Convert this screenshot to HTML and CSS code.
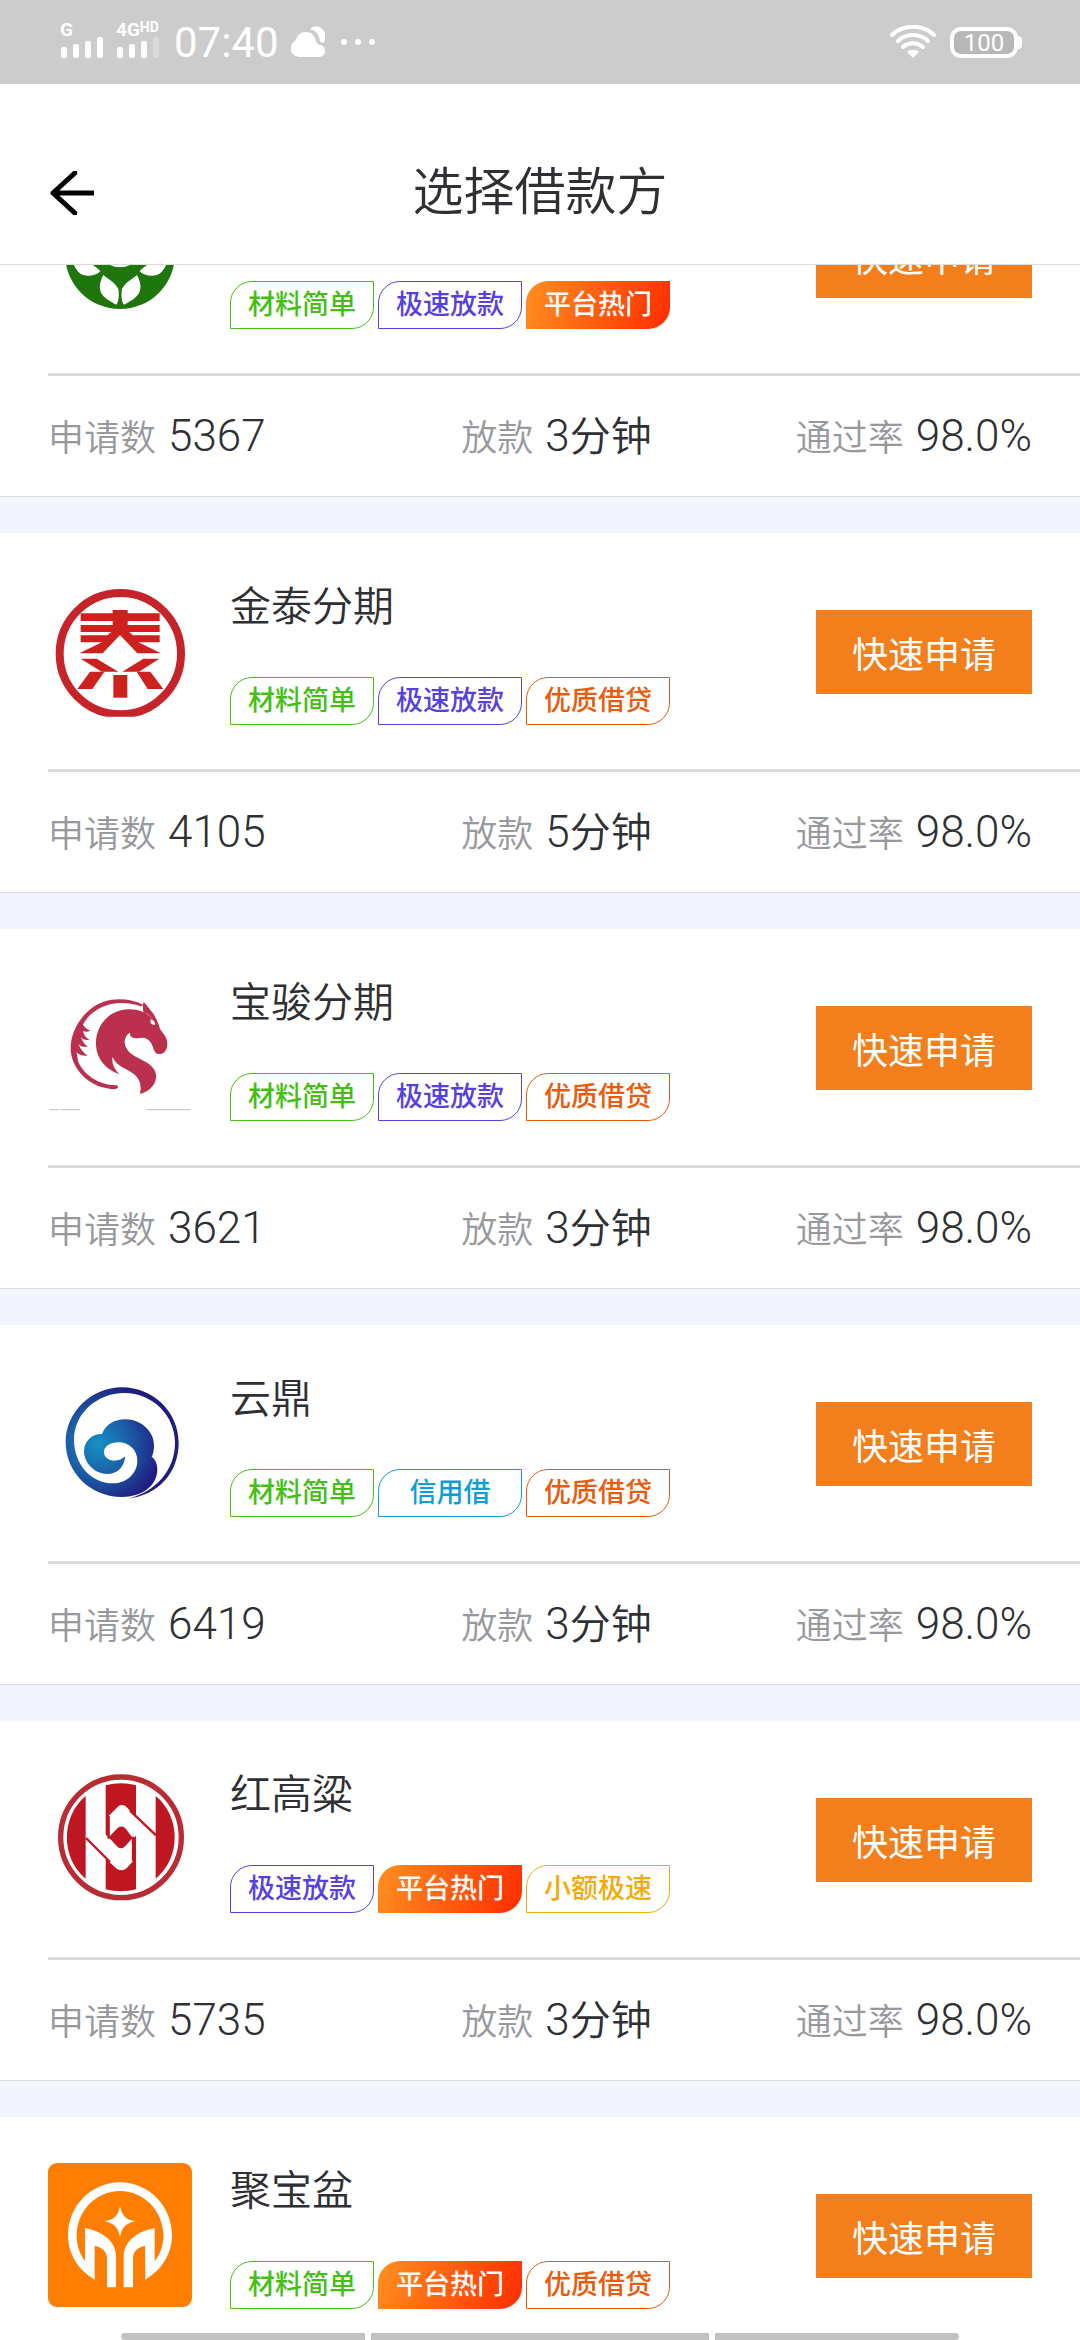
FILE: index.html
```html
<!DOCTYPE html>
<html lang="zh-CN">
<head>
    <meta charset="UTF-8">
    <meta name="viewport" content="width=device-width, initial-scale=1.0">
    <title>选择借款方</title>
    <link rel="stylesheet" href="styles.css">
</head>
<body>
    <div class="status-bar">
        <div class="signal">
            <span class="net">G</span>
            <svg width="44" height="21" viewBox="0 0 44 21" fill="#fff">
                <rect x="1" y="10" width="6" height="11" rx="2"/>
                <rect x="13" y="7" width="6" height="14" rx="2"/>
                <rect x="25" y="4" width="6" height="17" rx="2"/>
                <rect x="37" y="0" width="6" height="21" rx="2"/>
            </svg>
        </div>
        <div class="signal second">
            <span class="net">4G<sup>HD</sup></span>
            <svg width="44" height="21" viewBox="0 0 44 21" fill="#fff">
                <rect x="1" y="10" width="6" height="11" rx="2"/>
                <rect x="13" y="7" width="6" height="14" rx="2"/>
                <rect x="25" y="4" width="6" height="17" rx="2"/>
                <rect x="37" y="0" width="6" height="21" rx="2" opacity="0.25"/>
            </svg>
        </div>
        <span class="time">07:40</span>
        <svg class="cloud" width="34" height="32" viewBox="0 0 34 32" fill="#fff">
            <path d="M8 31a8 8 0 0 1-8-9c0-4 2-6 5-8C6 9 10 6 15 6c6 0 9 4 10 9 1 3 3 4 5 4 3 1 4 3 4 6 0 4-3 6-7 6z"/>
            <path d="M19 3c3-3 7-4 11-1 5 3 5 9 3 15l-4-1c0-6-3-11-10-13z"/>
        </svg>
        <svg width="34" height="6" viewBox="0 0 34 6" fill="#fff">
            <circle cx="3" cy="3" r="3"/>
            <circle cx="17" cy="3" r="3"/>
            <circle cx="31" cy="3" r="3"/>
        </svg>
        <svg class="wifi" width="46" height="34" viewBox="0 0 46 34" fill="none" stroke="#fff" stroke-width="4" stroke-linecap="round">
            <path d="M2 10C13-1 33-1 44 10"/>
            <path d="M8 16c8-8 22-8 30 0"/>
            <path d="M13 22c6-5 14-5 20 0"/>
            <path d="M17 27c3-3 9-3 12 0l-6 6z" fill="#fff" stroke="none"/>
        </svg>
        <div class="battery">100</div>
    </div>

    <header class="nav">
        <button class="back" aria-label="返回">
            <svg width="44" height="44" viewBox="0 0 44 44" fill="none" stroke="#000" stroke-width="5">
                <path d="M44 22H4M27 1h-1L3 22l23 21h1" stroke-linejoin="round"/>
            </svg>
        </button>
        <h1>选择借款方</h1>
    </header>

    <main>
        <ul class="loans">
            <li class="loan">
                <div class="top">
                    <svg class="logo" viewBox="24 -216 432 432">
                        <circle cx="240" cy="-3" r="165" fill="#1f760c"/>
                        <g fill="#fff">
                            <path d="M190 60c-18 34-12 55 10 72l28 17c9-5 10-32 7-47-10-20-28-28-45-42z"/>
                            <path d="M291 60c18 34 12 55-10 72l-28 17c-9-5-10-32-7-47 10-20 28-28 45-42z"/>
                            <path d="M98 22c12 28 25 43 52 40 15-1 26-7 31-14-20-20-45-36-83-26z"/>
                            <path d="M382 22c-12 28-25 43-52 40-15-1-26-7-31-14 20-20 45-36 83-26z"/>
                            <ellipse cx="240" cy="0" rx="50" ry="37"/>
                        </g>
                    </svg>
                    <div class="info">
                        <div class="tags">
                            <span class="tag green">材料简单</span>
                            <span class="tag purple">极速放款</span>
                            <span class="tag hot">平台热门</span>
                        </div>
                    </div>
                    <button class="apply">快速申请</button>
                </div>
                <div class="stats">
                    <div>申请数 <b>5367</b></div>
                    <div>放款 <b>3<small>分钟</small></b></div>
                    <div>通过率 <b>98.0%</b></div>
                </div>
            </li>

            <li class="loan">
                <div class="top">
                    <svg class="logo" viewBox="54 57 432 432">
                        <clipPath id="cut"><rect x="54" y="57" width="432" height="413"/></clipPath>
                        <circle cx="271" cy="281" r="182" fill="none" stroke="#c4242a" stroke-width="24" clip-path="url(#cut)"/>
                        <g fill="#cc211c">
                            <path d="M152 160h96v-10h45v10h96v23h-96v12h96v21h-92l12 10h80v21h-64l68 33h-71l-52-55-52 55h-70l68-33h-64v-21h80l12-10h-92v-21h96v-12h-96z"/>
                            <path d="M152 296h48l65 39h-50zM388 296h-48l-63 39h50z"/>
                            <path d="M180 335h43l-36 52h-45zM361 335h-41l33 52h47z"/>
                            <path d="M250 345h42v68h-42z"/>
                        </g>
                    </svg>
                    <div class="info">
                        <h2>金泰分期</h2>
                        <div class="tags">
                            <span class="tag green">材料简单</span>
                            <span class="tag purple">极速放款</span>
                            <span class="tag orange">优质借贷</span>
                        </div>
                    </div>
                    <button class="apply">快速申请</button>
                </div>
                <div class="stats">
                    <div>申请数 <b>4105</b></div>
                    <div>放款 <b>5<small>分钟</small></b></div>
                    <div>通过率 <b>98.0%</b></div>
                </div>
            </li>

            <li class="loan">
                <div class="top">
                    <svg class="logo" viewBox="54 45 432 432">
                        <g fill="#bb304f">
                            <path d="M338 137l3-12 16 20c17 20 27 38 33 62 10 15 23 26 22 46-1 14-6 27-20 29-14 2-18-5-22-17-4-14-12-28-28-32-13 0-25 5-36-1-7-4-5-9-7-14-10 6-16 19-15 31 3 31 37 42 62 56 22 13 34 27 32 48-2 26-25 42-48 49 5-24 0-44-15-57-22-20-55-23-67-54-4 21 6 36 20 52-39-15-67-43-70-86-4-60 40-108 97-109 30-1 55 9 75 30-7-9-18-17-30-21z"/>
                            <path d="M340 134c-53-23-112-23-158 13-39 31-61 77-60 122 3 54 46 99 96 113 18 5 32 7 42 4 7-4 5-11-4-10-50-2-93-30-111-70-2-10-4-19-5-30 7 9 18 13 33 11-13-7-22-20-27-34 9 8 16 9 28 6-13-7-17-17-21-28 8 9 15 10 25 8-11-6-17-15-19-27 7 4 13 4 22 0-8-4-17-9-22-18 25-49 91-83 174-55z"/>
                        </g>
                        <path d="M362 178c-3 11 2 17 13 17 1-8-4-15-13-17z" fill="#fff"/>
                        <path d="M58 449h28M91 449h59M349 449h133" stroke="#ccc" stroke-width="4"/>
                    </svg>
                    <div class="info">
                        <h2>宝骏分期</h2>
                        <div class="tags">
                            <span class="tag green">材料简单</span>
                            <span class="tag purple">极速放款</span>
                            <span class="tag orange">优质借贷</span>
                        </div>
                    </div>
                    <button class="apply">快速申请</button>
                </div>
                <div class="stats">
                    <div>申请数 <b>3621</b></div>
                    <div>放款 <b>3<small>分钟</small></b></div>
                    <div>通过率 <b>98.0%</b></div>
                </div>
            </li>

            <li class="loan">
                <div class="top">
                    <svg class="logo" viewBox="54 33 432 432">
                        <defs>
                            <radialGradient id="sea" gradientUnits="userSpaceOnUse" cx="205" cy="255" r="190">
                                <stop offset="0" stop-color="#1691c4"/>
                                <stop offset="0.5" stop-color="#1b5da6"/>
                                <stop offset="1" stop-color="#1f1d80"/>
                            </radialGradient>
                        </defs>
                        <path d="M276 82c94 0 170 75 170 166 0 91-62 157-152 168 86-22 141-88 141-168 0-80-66-149-152-149-82 0-151 62-151 140 0 75 53 131 116 131 45 0 74-33 74-68 0-34-27-55-56-55-26 0-44 12-44 30 0 15 14 25 31 25 13 0 24-5 33-13-4 35-26 53-54 53-39 0-70-34-70-68 0-31 25-53 54-52 11-29 38-44 70-44 49 0 88 38 86 82-1 14-3 24-7 30 11 7 17 22 17 38 0 51-48 83-106 83-93 0-169-72-169-165 0-88 76-164 169-164z" fill="url(#sea)"/>
                    </svg>
                    <div class="info">
                        <h2>云鼎</h2>
                        <div class="tags">
                            <span class="tag green">材料简单</span>
                            <span class="tag blue">信用借</span>
                            <span class="tag orange">优质借贷</span>
                        </div>
                    </div>
                    <button class="apply">快速申请</button>
                </div>
                <div class="stats">
                    <div>申请数 <b>6419</b></div>
                    <div>放款 <b>3<small>分钟</small></b></div>
                    <div>通过率 <b>98.0%</b></div>
                </div>
            </li>

            <li class="loan">
                <div class="top">
                    <svg class="logo" viewBox="54 51 432 432">
                        <circle cx="273" cy="262" r="181" fill="none" stroke="#b92c34" stroke-width="16"/>
                        <g fill="#bf1722">
                            <path d="M167 138v248c-75-62-75-186 0-248zM377 138v248c76-62 76-186 0-248z"/>
                            <path d="M227 106c30-8 62-8 91 0v96l-28-30c-8-9-20-9-28 0l-26 26v64l-9-8z"/>
                            <path d="M318 418c-30 8-62 8-91 0v-92l30 27c10 10 24 10 34 0l18-19v-68l9-9z"/>
                            <path d="M236 262l24-25c8-10 20-10 28 0l20 27-22 24c-8 9-18 9-26 0z"/>
                        </g>
                        <path d="M168 264l72 72M300 182l78 74M236 266v-68M309 260v74" fill="none" stroke="#bf1722" stroke-width="7"/>
                    </svg>
                    <div class="info">
                        <h2>红高粱</h2>
                        <div class="tags">
                            <span class="tag purple">极速放款</span>
                            <span class="tag hot">平台热门</span>
                            <span class="tag yellow">小额极速</span>
                        </div>
                    </div>
                    <button class="apply">快速申请</button>
                </div>
                <div class="stats">
                    <div>申请数 <b>5735</b></div>
                    <div>放款 <b>3<small>分钟</small></b></div>
                    <div>通过率 <b>98.0%</b></div>
                </div>
            </li>

            <li class="loan">
                <div class="top">
                    <svg class="logo" viewBox="54 69 432 432">
                        <rect x="54" y="69" width="432" height="432" rx="27" fill="#fe7d03"/>
                        <g fill="#fff">
                            <path d="M270 198c6 30 18 41 46 46-28 6-40 17-46 46-6-29-18-40-47-46 29-5 41-16 47-46z"/>
                            <path d="M194 419c-49-28-80-77-80-133 0-88 70-159 156-159s156 71 156 159c0 56-32 105-80 133l-1-102c-20 5-36 15-36 38v87h-28v-92c0-48 44-77 93-86v99c16-20 26-46 26-76 0-74-58-134-130-134s-130 60-130 134c0 30 10 56 25 76v-99c50 9 93 38 93 86v92h-27v-87c0-23-17-33-37-38z"/>
                        </g>
                    </svg>
                    <div class="info">
                        <h2>聚宝盆</h2>
                        <div class="tags">
                            <span class="tag green">材料简单</span>
                            <span class="tag hot">平台热门</span>
                            <span class="tag orange">优质借贷</span>
                        </div>
                    </div>
                    <button class="apply">快速申请</button>
                </div>
            </li>
        </ul>
    </main>

    <div class="gesture-bar">
        <span></span>
        <span class="wide"></span>
        <span></span>
    </div>
</body>
</html>
```

FILE: styles.css
```css
* {
    box-sizing: border-box;
}

body {
    margin: 0;
    height: 100vh;
    display: flex;
    flex-direction: column;
    overflow: hidden;
    background: #fff;
    color: #2e3033;
    font-family: Roboto, "Noto Sans CJK SC", sans-serif;
    font-weight: 350;
}

h1, h2, ul {
    margin: 0;
    padding: 0;
    font-weight: 350;
}

button {
    border: none;
    padding: 0;
    font-family: inherit;
    cursor: pointer;
}

/* Phone status bar */
.status-bar {
    flex: none;
    display: flex;
    align-items: center;
    height: 84px;
    padding: 0 62px 0 60px;
    background: #ccc;
    color: #fff;
}

.signal {
    display: flex;
    flex-direction: column;
    height: 40px;
}

.signal svg {
    display: block;
}

.second {
    width: 46px;
    margin-left: 12px;
}

.net {
    height: 15px;
    font-size: 19px;
    line-height: 15px;
    font-weight: 700;
    white-space: nowrap;
}

.net sup {
    font-size: 14px;
    line-height: 10px;
    vertical-align: 4px;
}

.time {
    margin-left: 12px;
    font-size: 42px;
    font-weight: 400;
}

.cloud {
    margin: 0 16px 0 12px;
}

.wifi {
    margin-left: auto;
}

.battery {
    position: relative;
    width: 68px;
    height: 31px;
    margin-left: 14px;
    border: 4px solid #fff;
    border-radius: 11px;
    background: #b8b8b8;
    font-size: 24px;
    font-weight: 400;
    line-height: 24px;
    text-align: center;
}

.battery::after {
    content: "";
    position: absolute;
    top: 5px;
    right: -8px;
    width: 4px;
    height: 13px;
    border-radius: 0 4px 4px 0;
    background: #fff;
}

/* Title bar */
.nav {
    flex: none;
    display: grid;
    grid-template-columns: 1fr auto 1fr;
    align-items: center;
    height: 181px;
    padding: 38px 50px 0;
    border-bottom: 1px solid #dcdcdc;
}

.nav h1 {
    font-size: 51px;
    line-height: 72px;
}

.back {
    justify-self: start;
    background: none;
}

.back svg {
    display: block;
}

/* Loan list, scrolled part of the way through the first item */
main {
    flex: 1;
    min-height: 0;
    overflow: hidden;
}

.loans {
    margin-top: -128px;
    list-style: none;
    background: #f2f5fd;
}

.loan {
    margin-bottom: 36px;
    border-bottom: 1px solid #dcdcdc;
    background: #fff;
}

.top {
    display: flex;
    margin-left: 48px;
    padding: 46px 48px 44px 0;
    border-bottom: 3px solid #dcdcdc;
}

.logo {
    width: 144px;
    height: 144px;
    margin-right: 38px;
}

.info {
    display: flex;
    flex-direction: column;
    height: 146px;
}

.info h2 {
    font-size: 41px;
    line-height: 56px;
}

.tags {
    display: flex;
    gap: 4px;
    margin-top: auto;
}

.tag {
    width: 144px;
    height: 48px;
    border: 1px solid;
    border-radius: 22px 0;
    font-size: 27px;
    font-weight: 500;
    line-height: 46px;
    text-align: center;
}

.green {
    color: #44bf16;
}

.purple {
    color: #5641e0;
}

.orange {
    color: #ea5b0c;
}

.blue {
    color: #0c9fd6;
}

.yellow {
    color: #f2ab0c;
}

.hot {
    border: none;
    line-height: 48px;
    color: #fff;
    background: linear-gradient(105deg, #ff8f1f, #ff2d00);
}

.apply {
    align-self: center;
    width: 216px;
    height: 84px;
    margin-left: auto;
    background: #f27f1b;
    color: #fff;
    font-size: 36px;
}

.stats {
    display: grid;
    grid-template-columns: 42% 1fr auto;
    align-items: center;
    height: 120px;
    padding: 0 48px;
    color: #97999d;
    font-size: 36px;
}

.stats div {
    display: flex;
    align-items: baseline;
    gap: 12px;
}

.stats b {
    color: #2e3033;
    font-size: 44px;
    line-height: 60px;
    font-weight: 300;
}

.stats small {
    font-size: 41px;
    font-weight: 350;
}

.gesture-bar {
    position: fixed;
    bottom: 0;
    left: 0;
    right: 0;
    display: flex;
    gap: 6px;
    height: 7px;
    padding: 0 121px;
}

.gesture-bar span {
    flex: 244;
    background: #c2c2c2;
}

.gesture-bar .wide {
    flex: 338;
}

.gesture-bar span:first-child {
    border-radius: 4px 0 0 4px;
}

.gesture-bar span:last-child {
    border-radius: 0 4px 4px 0;
}
```
